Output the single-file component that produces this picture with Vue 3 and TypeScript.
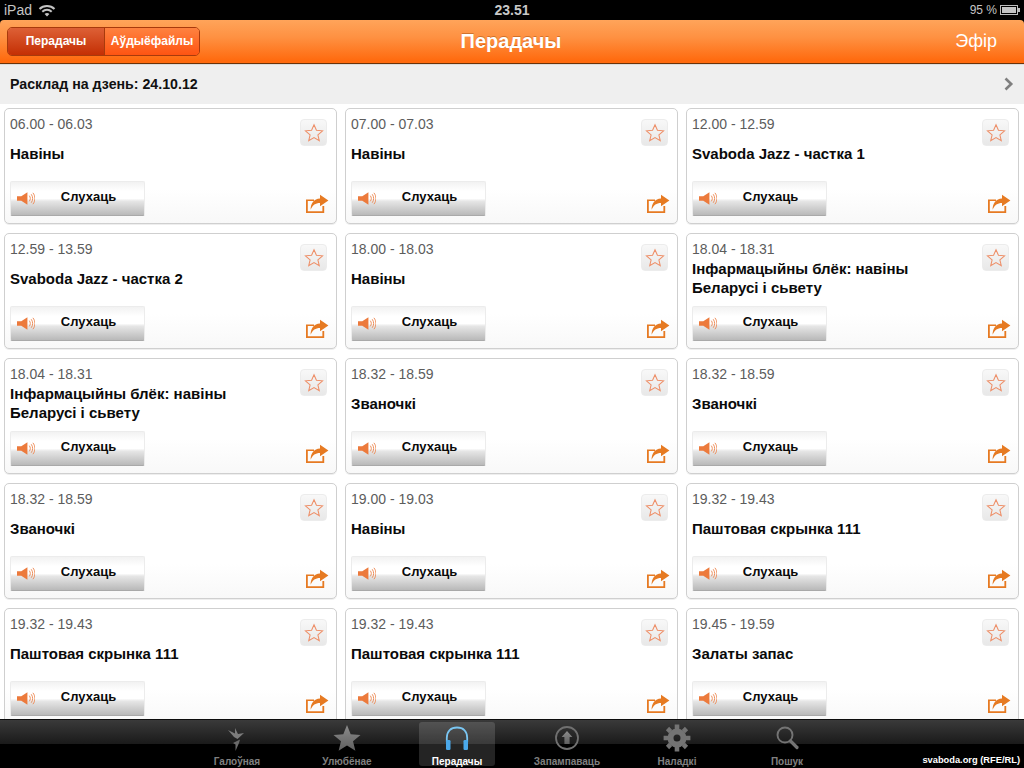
<script setup lang="ts">
interface Item { time: string; title: string }
const items: Item[] = [
  { time: '06.00 - 06.03', title: 'Навіны' },
  { time: '07.00 - 07.03', title: 'Навіны' },
  { time: '12.00 - 12.59', title: 'Svaboda Jazz - частка 1' },
  { time: '12.59 - 13.59', title: 'Svaboda Jazz - частка 2' },
  { time: '18.00 - 18.03', title: 'Навіны' },
  { time: '18.04 - 18.31', title: 'Інфармацыйны блёк: навіны Беларусі і сьвету' },
  { time: '18.04 - 18.31', title: 'Інфармацыйны блёк: навіны Беларусі і сьвету' },
  { time: '18.32 - 18.59', title: 'Званочкі' },
  { time: '18.32 - 18.59', title: 'Званочкі' },
  { time: '18.32 - 18.59', title: 'Званочкі' },
  { time: '19.00 - 19.03', title: 'Навіны' },
  { time: '19.32 - 19.43', title: 'Паштовая скрынка 111' },
  { time: '19.32 - 19.43', title: 'Паштовая скрынка 111' },
  { time: '19.32 - 19.43', title: 'Паштовая скрынка 111' },
  { time: '19.45 - 19.59', title: 'Залаты запас' },
]
</script>

<template>
  <div class="app">
    <div class="status">
      <div class="status-left">
        <span>iPad</span>
        <svg width="18" height="13" viewBox="0 0 18 13" fill="none" stroke="#c4c4c4" stroke-width="2">
          <path d="M1.5 5 C5.5 1 12.5 1 16.5 5" />
          <path d="M4.3 7.8 C7 5.2 11 5.2 13.7 7.8" />
          <path d="M9 12.5 L6.6 10 C8 8.8 10 8.8 11.4 10 Z" fill="#c4c4c4" stroke="none" />
        </svg>
      </div>
      <div class="clock">23.51</div>
      <div class="status-right">
        <span>95 %</span>
        <svg width="20" height="10" viewBox="0 0 20 10">
          <rect x="0.5" y="0.5" width="17" height="9" fill="none" stroke="#bdbdbd" />
          <rect x="2" y="2" width="14" height="6" fill="#c4c4c4" />
          <rect x="18" y="3" width="2" height="4" fill="#bdbdbd" />
        </svg>
      </div>
    </div>

    <header class="nav">
      <div class="segmented">
        <span class="seg seg-on">Перадачы</span>
        <span class="seg seg-off">Аўдыёфайлы</span>
      </div>
      <div class="nav-title">Перадачы</div>
      <div class="nav-action">Эфір</div>
    </header>

    <div class="datebar">
      <span>Расклад на дзень: 24.10.12</span>
      <svg width="10" height="14" viewBox="0 0 10 14" fill="none" stroke="#7f7f7f" stroke-width="2.6">
        <path d="M1.5 1.5 L7.2 7 L1.5 12.5" />
      </svg>
    </div>

    <main class="list">
      <article v-for="(item, i) in items" :key="i" class="card">
        <div class="card-main">
          <div class="time">{{ item.time }}</div>
          <div class="title"><span>{{ item.title }}</span></div>
          <div class="listen">
            <svg class="speaker" width="18" height="15" viewBox="0 0 19 15">
              <path d="M0 5 H4.5 L11 1 V14 L4.5 10 H0 Z" fill="#ec7a3c" />
              <path d="M13 4.5 C14.4 6.3 14.4 8.7 13 10.5 M15 3 C17 5.5 17 9.5 15 12 M16.8 1.5 C19.6 5 19.6 10 16.8 13.5" fill="none" stroke="#ec8a55" stroke-width="1" />
            </svg>
            <span>Слухаць</span>
          </div>
        </div>
        <div class="card-side">
          <button class="fav" type="button" aria-label="star">
            <svg width="20" height="19" viewBox="0 0 19 18">
              <path d="M9.5 1.6 L11.8 6.9 L17.6 7.4 L13.2 11.2 L14.5 16.8 L9.5 13.8 L4.5 16.8 L5.8 11.2 L1.4 7.4 L7.2 6.9 Z" fill="none" stroke="#ee8f68" stroke-width="1" />
            </svg>
          </button>
          <svg class="share" width="24" height="20" viewBox="0 0 24 20">
            <path d="M1 5.5 H9 V7 H2.8 V17.2 H17.4 V12 H19.2 V19 H1 Z" fill="#e67a22" />
            <path d="M15 0.8 L23.4 6.6 L15 12.2 V9 C10.5 9 7.6 11 5.6 15.8 C5.6 9.6 9 4.8 15 4.6 Z" fill="#e67a22" />
          </svg>
        </div>
      </article>
    </main>

    <footer class="tabbar">
      <div class="tabs">
        <div class="tab">
          <svg class="ico" width="30" height="30" viewBox="0 0 30 30">
            <defs>
              <linearGradient id="tabGrey" x1="0" y1="0" x2="0" y2="1">
                <stop offset="0" stop-color="#8c8c8c" />
                <stop offset="1" stop-color="#5f5f5f" />
              </linearGradient>
            </defs>
            <path d="M6 7 L13 10.5 L13 5 L16 11 L22 10 L15.5 16 L12 14 Z" fill="#7c7c7c" />
            <path d="M11 20 L18 16.5 L17 20 L13.5 28 L13.5 21.5 Z" fill="#6a6a6a" />
          </svg>
          <span>Галоўная</span>
        </div>
        <div class="tab">
          <svg class="ico" width="30" height="30" viewBox="0 0 30 30">
            <path d="M15 2 L18.7 11.2 L28.5 11.9 L21 18.2 L23.4 27.8 L15 22.6 L6.6 27.8 L9 18.2 L1.5 11.9 L11.3 11.2 Z" fill="url(#tabGrey)" />
          </svg>
          <span>Улюбёнае</span>
        </div>
        <div class="tab tab-on">
          <svg class="ico" width="30" height="30" viewBox="0 0 30 30">
            <path d="M4.8 19 V15 C4.8 8 9 4.5 15 4.5 C21 4.5 25.2 8 25.2 15 V19" fill="none" stroke="#7ac6f2" stroke-width="1.8" />
            <rect x="4" y="17" width="4.5" height="10" rx="1.2" fill="#4aa8ea" />
            <rect x="21.5" y="17" width="4.5" height="10" rx="1.2" fill="#4aa8ea" />
          </svg>
          <span>Перадачы</span>
        </div>
        <div class="tab">
          <svg class="ico" width="30" height="30" viewBox="0 0 30 30">
            <circle cx="15" cy="15" r="11" fill="none" stroke="#707070" stroke-width="1.8" />
            <path d="M15 8 L20.4 14 H17.6 V21 H12.4 V14 H9.6 Z" fill="url(#tabGrey)" />
          </svg>
          <span>Запампаваць</span>
        </div>
        <div class="tab">
          <svg class="ico" width="30" height="30" viewBox="0 0 30 30">
            <circle cx="15" cy="15" r="6.5" fill="none" stroke="#737373" stroke-width="6" />
            <g stroke="#737373" stroke-width="4.6">
              <path d="M15 1.6 V6 M15 24 V28.4 M1.6 15 H6 M24 15 H28.4 M5.5 5.5 L8.6 8.6 M21.4 21.4 L24.5 24.5 M24.5 5.5 L21.4 8.6 M8.6 21.4 L5.5 24.5" />
            </g>
          </svg>
          <span>Наладкі</span>
        </div>
        <div class="tab">
          <svg class="ico" width="30" height="30" viewBox="0 0 30 30">
            <circle cx="13" cy="12" r="7.5" fill="none" stroke="#747474" stroke-width="1.9" />
            <path d="M18.5 18 L25 24.5" stroke="#747474" stroke-width="3.2" stroke-linecap="round" />
          </svg>
          <span>Пошук</span>
        </div>
      </div>
      <div class="credit">svaboda.org (RFE/RL)</div>
    </footer>
  </div>
</template>

<style scoped>
.app {
  width: 1024px;
  height: 768px;
  display: flex;
  flex-direction: column;
  overflow: hidden;
  background: #000;
  font-family: "Liberation Sans", Arial, sans-serif;
}
.status {
  height: 20px;
  flex: none;
  background: #000;
  color: #c4c4c4;
  font-size: 14px;
  display: grid;
  grid-template-columns: 1fr auto 1fr;
  align-items: center;
  padding: 0 4px;
}
.status-left { display: flex; align-items: center; gap: 6px; }
.clock { font-weight: bold; font-size: 14px; color: #c8c8c8; }
.status-right {
  display: flex;
  justify-content: flex-end;
  align-items: center;
  gap: 3px;
  font-size: 12px;
}
.nav {
  height: 44px;
  flex: none;
  box-sizing: border-box;
  display: grid;
  grid-template-columns: 1fr auto 1fr;
  align-items: center;
  padding: 0 7px;
  background: linear-gradient(#ffa45a, #fe9142 40%, #ff6a0e 95%);
  border-bottom: 1px solid #6b3208;
  border-radius: 4px 4px 0 0;
}
.segmented {
  display: flex;
  width: 193px;
  height: 29px;
  box-sizing: border-box;
  border: 1px solid #a83a0c;
  border-radius: 5px;
  overflow: hidden;
  font-size: 12px;
  font-weight: bold;
  color: #fff;
  margin-bottom: 1px;
}
.seg { display: flex; align-items: center; justify-content: center; white-space: nowrap; }
.seg-on {
  width: 96px;
  background: linear-gradient(#dd6036, #c42f04);
  border-right: 1px solid #a83a0c;
}
.seg-off {
  flex: 1;
  background: linear-gradient(#fe8240, #fe5412);
}
.nav-title {
  color: #fff;
  font-size: 20px;
  font-weight: bold;
  margin-right: 2px;
  text-shadow: 0 -1px 0 rgba(150, 70, 10, 0.45);
}
.nav-action {
  color: #fff;
  font-size: 18px;
  justify-self: end;
  margin-right: 20px;
}
.datebar {
  height: 40px;
  flex: none;
  box-sizing: border-box;
  background: #efefef;
  border-top: 1px solid #dcdcdc;
  display: flex;
  justify-content: space-between;
  align-items: center;
  padding: 0 10px 2px;
  font-size: 14.2px;
  font-weight: bold;
  color: #111;
}
.list {
  flex: 1;
  min-height: 0;
  overflow: hidden;
  display: grid;
  grid-template-columns: repeat(3, 333px);
  grid-auto-rows: 116px;
  column-gap: 8px;
  row-gap: 9px;
  padding: 4px 4px 0;
  align-content: start;
  background: #fff;
}
.card {
  box-sizing: border-box;
  border: 1px solid #cfcfcf;
  border-radius: 5px;
  background: linear-gradient(#fff 70%, #f8f8f8);
  box-shadow: 0 1px 0 #eee;
  display: flex;
  justify-content: space-between;
  padding: 6px 7px 7px 5px;
}
.card-main {
  width: 270px;
  display: flex;
  flex-direction: column;
}
.time {
  height: 19px;
  line-height: 19px;
  font-size: 14px;
  color: #5c5c5c;
}
.title {
  height: 38px;
  margin-bottom: 2px;
  display: flex;
  align-items: center;
  font-size: 15px;
  line-height: 19px;
  font-weight: bold;
  color: #0a0a0a;
  width: 240px;
}
.listen {
  margin-top: 7px;
  width: 135px;
  height: 35px;
  box-sizing: border-box;
  border: 1px solid #ececec;
  border-bottom: 1px solid #a9a9a9;
  border-radius: 2px;
  background: linear-gradient(#f2f2f2, #fff 28%, #fff 50%, #e6e6e6 58%, #b9b9b9 100%);
  position: relative;
  display: flex;
  align-items: center;
  justify-content: center;
  font-size: 13px;
  font-weight: bold;
  color: #0a0a0a;
  padding: 0 0 4px 22px;
}
.speaker { position: absolute; left: 6px; top: 9px; }
.card-side {
  display: flex;
  flex-direction: column;
  align-items: flex-end;
  justify-content: space-between;
}
.fav {
  margin: 4px 2px 0 0;
  width: 27px;
  height: 27px;
  padding: 0;
  border: 1px solid #ececec;
  border-radius: 4px;
  background: linear-gradient(#f8f8f8, #e8e8e8);
  display: flex;
  align-items: center;
  justify-content: center;
}
.share { display: block; margin-bottom: 2px; }
.tabbar {
  height: 49px;
  flex: none;
  box-sizing: border-box;
  border-top: 1px solid #0c0c0c;
  background: linear-gradient(#3a3a3a, #1a1a1a 50%, #000 50%);
  position: relative;
  display: flex;
  justify-content: center;
}
.tabs {
  width: 660px;
  display: grid;
  grid-template-columns: repeat(6, 110px);
}
.tab {
  justify-self: center;
  width: 76px;
  height: 44px;
  margin-top: 2px;
  border-radius: 3px;
  display: flex;
  flex-direction: column;
  align-items: center;
  font-size: 10px;
  font-weight: bold;
  color: #808080;
}
.tab .ico { margin-top: 1px; height: 30px; flex: none; }
.tab span { margin-top: 3px; white-space: nowrap; line-height: 11px; }
.tab-on {
  background: rgba(255, 255, 255, 0.14);
  color: #fff;
}
.credit {
  position: absolute;
  right: 4px;
  bottom: 3px;
  font-size: 9.3px;
  font-weight: bold;
  color: #fff;
}
</style>
